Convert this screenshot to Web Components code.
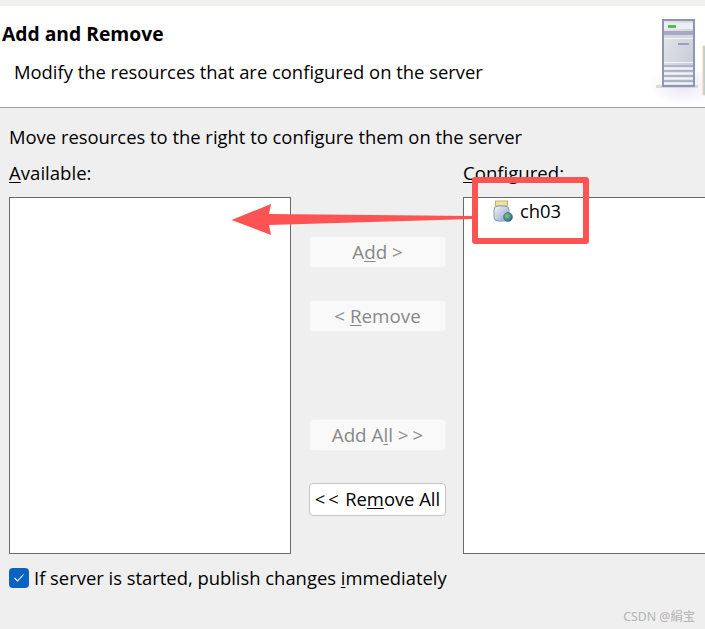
<!DOCTYPE html>
<html>
<head>
<meta charset="utf-8">
<title>Add and Remove</title>
<style>
  html, body { margin: 0; padding: 0; }
  body { background: #efefef; font-family: "Open Sans", "Noto Sans", sans-serif; color: #000; }
</style>
</head>
<body>
<wizard-page>
  <wizard-header slot="header" title="Add and Remove" subtitle="Modify the resources that are configured on the server"></wizard-header>
  <span slot="hint">Move resources to the right to configure them on the server</span>
  <resource-list slot="available" key="A" rest="vailable:"></resource-list>
  <wizard-button slot="buttons" style="margin-top:75px" disabled before="A" key="d" after="d &gt;"></wizard-button>
  <wizard-button slot="buttons" style="margin-top:32px" disabled before="&lt; " key="R" after="emove"></wizard-button>
  <wizard-button slot="buttons" style="margin-top:87px" disabled before="Add A" key="l" after="l &gt;&gt;"></wizard-button>
  <wizard-button slot="buttons" style="margin-top:32px;height:33px" before="&lt;&lt; Re" key="m" after="ove All"></wizard-button>
  <resource-list slot="configured" key="C" rest="onfigured:"><jar-item>ch03</jar-item></resource-list>
  <check-option slot="option" before="If server is started, publish changes " key="i" after="mmediately"></check-option>
</wizard-page>
<red-annotation></red-annotation>
<span-watermark></span-watermark>

<script>
class WizardPage extends HTMLElement {
  constructor() {
    super();
    this.attachShadow({mode: 'open'}).innerHTML = `
    <style>
      :host { display: block; height: 629px; overflow: hidden; }
      .strip { height: 6px; background: #f3f0f0; }
      .body { padding: 17px 0 0 9px; }
      .hint { font-size: 18.4px; line-height: 24px; height: 24px; }
      .columns {
        display: grid;
        grid-template-columns: 282px 172px 260px;
        margin-top: 12px;
      }
      .buttons { display: flex; flex-direction: column; padding: 0 0 0 18px; width: 137px; }
      .option { margin-top: 12px; }
    </style>
    <div class="strip"></div>
    <slot name="header"></slot>
    <div class="body">
      <div class="hint"><slot name="hint"></slot></div>
      <div class="columns">
        <slot name="available"></slot>
        <div class="buttons"><slot name="buttons"></slot></div>
        <slot name="configured"></slot>
      </div>
      <div class="option"><slot name="option"></slot></div>
    </div>`;
  }
}

class WizardHeader extends HTMLElement {
  constructor() {
    super();
    this.attachShadow({mode: 'open'}).innerHTML = `
    <style>
      :host {
        display: flex;
        justify-content: space-between;
        height: 101px;
        background: #fff;
        border-bottom: 1px solid #a0a0a0;
        overflow: hidden;
      }
      h1 { margin: 16px 0 0 2px; font-size: 19.3px; line-height: 24px; font-weight: 700; }
      p { margin: 14px 0 0 14px; font-size: 18.4px; line-height: 24px; }
      svg { flex: none; filter: blur(.4px); }
    </style>
    <div>
      <h1>${this.getAttribute('title')}</h1>
      <p>${this.getAttribute('subtitle')}</p>
    </div>
    <svg width="55" height="101" viewBox="650 6 55 101">
      <defs>
        <linearGradient id="case" x1="0" y1="0" x2="1" y2="1">
          <stop offset="0" stop-color="#e6e8ee"/><stop offset="1" stop-color="#c2c6d2"/>
        </linearGradient>
        <radialGradient id="glow" cx=".6" cy=".4" r=".6">
          <stop offset="0" stop-color="#e8e6f4"/><stop offset="1" stop-color="#fff"/>
        </radialGradient>
      </defs>
      <rect x="650" y="72" width="55" height="33" fill="url(#glow)"/>
      <rect x="656" y="85" width="42" height="3" fill="#d4d0d8" opacity=".8"/>
      <rect x="703" y="46" width="3" height="49" fill="#bcd0cc" stroke="#e8d6b4"/>
      <rect x="663" y="20" width="31" height="66" fill="url(#case)" stroke="#8f96b4" stroke-width="2"/>
      <rect x="664" y="23" width="29" height="6" fill="#eceef2"/>
      <rect x="668" y="25" width="8" height="3" fill="#4fc04f"/>
      <rect x="664" y="31" width="29" height="4" fill="#a5a9c4"/>
      <rect x="664" y="35" width="29" height="3" fill="#d4d6e0"/>
      <rect x="664" y="38" width="29" height="1" fill="#f6f7f9"/>
      <rect x="678" y="43" width="11" height="2" fill="#9a9ebd"/>
      <path d="M664 62.500h29" stroke="#f4f5f8" stroke-width="1"/>
      <path d="M664 66h29M664 71h29M664 76h29M664 81h29" stroke="#a5a9c4" stroke-width="1.400"/>
      <path d="M664 68.500h29M664 73.500h29M664 78.500h29M664 83.500h29" stroke="#f4f5f8" stroke-width="2"/>
    </svg>`;
  }
}

class ResourceList extends HTMLElement {
  constructor() {
    super();
    this.attachShadow({mode: 'open'}).innerHTML = `
    <style>
      :host { display: block; }
      .label { font-size: 18.6px; line-height: 24px; height: 36px; }
      u { text-underline-offset: 2px; }
      .box {
        box-sizing: border-box;
        height: 357px;
        background: #fff;
        border: 1px solid #6a6a6a;
        padding: 1px 0 0 29px;
      }
    </style>
    <div class="label"><u>${this.getAttribute('key')}</u>${this.getAttribute('rest')}</div>
    <div class="box"><slot></slot></div>`;
  }
}

class WizardButton extends HTMLElement {
  constructor() {
    super();
    const pairs = s => s.replace(/&lt;&lt;|&gt;&gt;/g, m => `<span class="pair">${m}</span>`);
    const esc = s => s.replace(/</g, '&lt;').replace(/>/g, '&gt;');
    this.attachShadow({mode: 'open'}).innerHTML = `
    <style>
      :host {
        display: flex;
        align-items: center;
        justify-content: center;
        box-sizing: border-box;
        height: 32px;
        padding-bottom: 2px;
        background: #fff;
        border: 1px solid #c6c6c6;
        border-radius: 4px;
        font-size: 18.4px;
        white-space: pre;
      }
      :host([disabled]) {
        padding-bottom: 0;
        background: #f9f9f9;
        border-color: #f2f2f2;
        color: #888;
        font-size: 18.8px;
      }
      u { text-underline-offset: 2px; }
      .pair { letter-spacing: 3px; margin-right: -1.500px; }
      :host([disabled]) .pair { letter-spacing: 4px; margin-right: -4px; }
    </style>
    <span>${pairs(esc(this.getAttribute('before')))}<u>${this.getAttribute('key')}</u>${pairs(esc(this.getAttribute('after')))}</span>`;
  }
}

class JarItem extends HTMLElement {
  constructor() {
    super();
    this.attachShadow({mode: 'open'}).innerHTML = `
    <style>
      :host { display: flex; align-items: center; gap: 6px; font-size: 18.4px; line-height: 24px; }
      svg { flex: none; filter: blur(.3px); }
    </style>
    <svg width="21" height="22" viewBox="0 0 21 22">
      <defs>
        <linearGradient id="jar" x1="0" y1="0" x2="1" y2="1">
          <stop offset="0" stop-color="#f2f5fa"/><stop offset="1" stop-color="#8fa4c4"/>
        </linearGradient>
        <radialGradient id="globe" cx=".4" cy=".4" r=".7">
          <stop offset="0" stop-color="#8cc88e"/><stop offset="1" stop-color="#1a5478"/>
        </radialGradient>
      </defs>
      <rect x="2.500" y="1" width="12" height="5" fill="#efe0a8" stroke="#c8b070"/>
      <rect x="1" y="6" width="15" height="15" rx="4" fill="url(#jar)" stroke="#8d9cb4"/>
      <circle cx="15" cy="17" r="4.500" fill="url(#globe)" stroke="#456f88" stroke-width=".6"/>
    </svg>
    <span><slot></slot></span>`;
  }
}

class CheckOption extends HTMLElement {
  constructor() {
    super();
    this.attachShadow({mode: 'open'}).innerHTML = `
    <style>
      :host { display: flex; align-items: center; gap: 5px; font-size: 18.4px; line-height: 24px; white-space: pre; }
      .box { flex: none; width: 20px; height: 20px; border-radius: 4px; background: #0a63c0; display: flex; align-items: center; justify-content: center; }
      u { text-underline-offset: 2px; }
    </style>
    <div class="box">
      <svg width="12" height="10" viewBox="0 0 12 10"><path d="M1.500 5 L4.500 8 L10.500 1.500" fill="none" stroke="#fff" stroke-width="1.100"/></svg>
    </div>
    <span>${this.getAttribute('before')}<u>${this.getAttribute('key')}</u>${this.getAttribute('after')}</span>`;
  }
}

// the red marks sit over the screenshot, so they are placed on the page itself
class RedAnnotation extends HTMLElement {
  constructor() {
    super();
    this.attachShadow({mode: 'open'}).innerHTML = `
    <style>
      :host { position: absolute; left: 0; top: 0; width: 705px; height: 629px; pointer-events: none; }
      .frame {
        position: absolute; left: 472px; top: 177px;
        box-sizing: border-box; width: 117px; height: 67px;
        border: 6px solid #fd5353; border-radius: 3px;
      }
      svg { position: absolute; left: 0; top: 0; }
    </style>
    <svg width="705" height="629">
      <path d="M231.500 220 L271 204 L269 214 L472 216 L472 219 L269 225 L271 235 Z" fill="#fd5353"/>
    </svg>
    <div class="frame"></div>`;
  }
}

class SpanWatermark extends HTMLElement {
  constructor() {
    super();
    this.attachShadow({mode: 'open'}).innerHTML = `
    <style>
      :host {
        position: absolute; right: 10px; top: 608px;
        font-family: "Noto Sans", "Noto Sans CJK SC", sans-serif;
        font-size: 12.300px; line-height: 18px; color: #b4b4b4; white-space: nowrap;
      }
    </style>
    CSDN @絹宝`;
  }
}

customElements.define('wizard-page', WizardPage);
customElements.define('wizard-header', WizardHeader);
customElements.define('resource-list', ResourceList);
customElements.define('wizard-button', WizardButton);
customElements.define('jar-item', JarItem);
customElements.define('check-option', CheckOption);
customElements.define('red-annotation', RedAnnotation);
customElements.define('span-watermark', SpanWatermark);
</script>
</body>
</html>
